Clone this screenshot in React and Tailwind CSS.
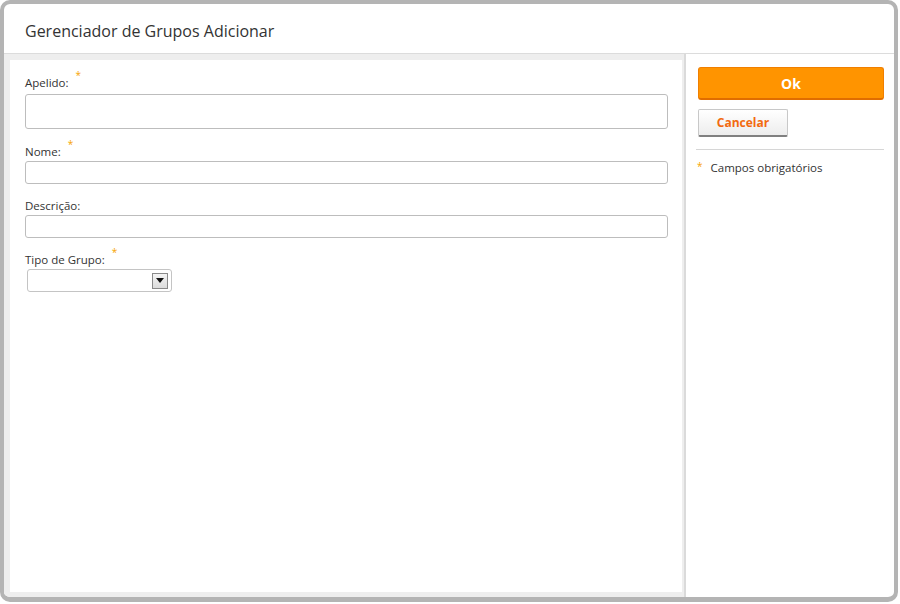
import React from 'react';

const Star = () => (
    <span className="ml-[7px] text-[10px] leading-none text-[#f7a300] relative -top-[4px]">*</span>
);

const App = () => {
    return (
        <div className="w-[900px] h-[604px] bg-white" style={{ fontFamily: '"Open Sans", "Liberation Sans", sans-serif' }}>
            <div className="w-[898px] h-[602px] border-[4px] border-b-[5px] border-[#b4b4b4] rounded-[10px] flex flex-col overflow-hidden bg-white">
                <div className="h-[50px] shrink-0 border-b border-[#dcdcdc] flex items-center pl-[21px] pt-[4px]">
                    <h1 className="text-[16px] text-[#333]">Gerenciador de Grupos Adicionar</h1>
                </div>
                <div className="flex flex-1 min-h-0">
                    <div className="w-[682px] shrink-0 bg-[#eeeeee] pl-[6px] pt-[6px] pr-[2px] pb-[5px] border-r-2 border-[#dadada]">
                        <div className="h-full bg-white pl-[15px] pr-[14px] pt-[14px] text-[11.5px] text-[#333]">
                            <label className="flex items-start h-[20px]">Apelido:<Star /></label>
                            <input className="block w-full h-[35px] border border-[#bdbdbd] rounded-[3px]" />
                            <label className="flex items-start h-[20px] mt-[14px]">Nome:<Star /></label>
                            <input className="block w-full h-[23px] border border-[#bdbdbd] rounded-[3px] mt-[-2px]" />
                            <label className="flex items-start h-[20px] mt-[13px]">Descrição:</label>
                            <input className="block w-full h-[23px] border border-[#bdbdbd] rounded-[3px] mt-[-2px]" />
                            <label className="flex items-start h-[20px] mt-[13px]">Tipo de Grupo:<Star /></label>
                            <div className="ml-[2px] mt-[-2px] w-[145px] h-[23px] border border-[#c4c4c4] rounded-[3px] flex items-center justify-end pr-[3px]">
                                <div className="w-[16px] h-[16px] border border-[#8a8a8a] bg-gradient-to-b from-[#f4f4f4] to-[#dcdcdc] flex items-center justify-center">
                                    <svg width="8" height="5" viewBox="0 0 8 5"><path d="M0 0h8L4 5z" fill="#111" /></svg>
                                </div>
                            </div>
                        </div>
                    </div>
                    <div className="flex-1 pl-[12px] pr-[10px] pt-[13px]">
                        <button className="w-full h-[33px] bg-[#ff9400] border border-[#f07f00] border-b-2 border-b-[#e06d00] rounded-[3px] text-white font-bold text-[14px]">Ok</button>
                        <button className="mt-[9px] w-[90px] h-[28px] bg-gradient-to-b from-white to-[#ededed] border border-[#c8c8c8] border-b-2 border-b-[#808080] rounded-[2px] text-[#f26a10] font-bold text-[12px]">Cancelar</button>
                        <div className="mt-[12px] border-t border-[#d6d6d6] -ml-[2px] pt-[9px] flex items-center text-[11.5px] text-[#333]">
                            <span className="text-[10px] text-[#f7a300] mr-[8px] ml-[1px] relative -top-[1px]">*</span>
                            Campos obrigatórios
                        </div>
                    </div>
                </div>
            </div>
        </div>
    );
};

export default App;
